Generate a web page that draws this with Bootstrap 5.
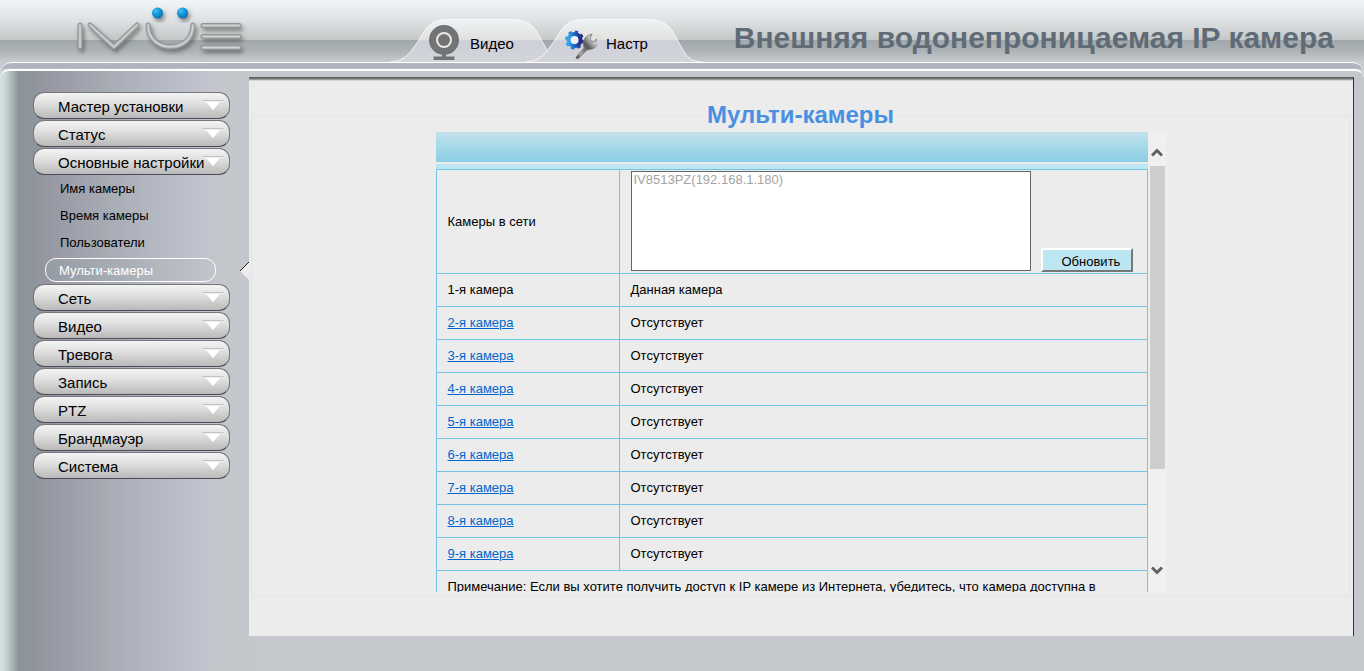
<!DOCTYPE html>
<html lang="ru">
<head>
<meta charset="utf-8">
<meta name="viewport" content="width=device-width, initial-scale=1">
<title>Мульти-камеры</title>
<link href="https://cdn.jsdelivr.net/npm/bootstrap@5.3.0/dist/css/bootstrap.min.css" rel="stylesheet">
<style>
body{font:13px/18px "Liberation Sans",Arial,sans-serif;color:#000;background:#c8cbcd}
.top-bar{height:62px;background:linear-gradient(#f1f5f9 0,#dfe2e4 20px,#c3c7c7 40px,#a1a8ac 40px,#acb1b4 50px,#c8cbcd 62px)}
.logo-box{width:390px;padding-left:70px}
.tab-link{position:relative;width:177px;height:43px;font-size:15px;line-height:20px;color:#000;text-decoration:none}
.tab-link + .tab-link{margin-left:-41px}
.tab-shape{position:absolute;inset:0}
.tab-icon{position:relative;width:34px;height:38px;margin-left:37px;margin-right:9px}
.tab-text{position:relative;padding-top:6px}
.product{font-size:30px;line-height:36px;color:#5f6b76;padding:20px 30px 0 0}
.shell{border-top:1px solid #fff;border-radius:12px 12px 0 0;background:linear-gradient(#b3b7bf,#adb1bd 5px,#c8ccd0 6px);padding-top:6px}
.shell-in{border-top:2px solid #fff;border-radius:9px 9px 0 0;padding:6px 10px 35px 0;
 background:linear-gradient(90deg,#d5e2e2 0,#d0dcdc 4px,#8b939b 19px,#8f959d 35px,#9798a3 50px,#a5a9b2 100px,#b3b7c1 150px,#c0c3cd 200px,#c3c6ca 214px,#c4c7cc 249px)}
.side{width:249px;padding:15px 0 0 33px}
.menu-btn{display:flex;align-items:center;justify-content:space-between;width:197px;height:27px;margin-bottom:1px;padding:1px 6px 0 24px;border:1px solid #77777b;border-bottom-color:#4d4d55;border-radius:11px;background:linear-gradient(#f4f4f4,#dedede 45%,#b9b9b9);font-size:15px;line-height:20px;white-space:nowrap;color:#000}
.menu-btn span{width:0;padding-top:1px}
.menu-btn svg{margin:-2px -1px 0 0}
.sub-link{display:block;height:27px;padding:4px 0 0 27px;color:#000;text-decoration:none}
.sub-link.current{width:171px;height:24px;margin:1px 0 3px 12px;padding:3px 0 0 13px;border:1px solid #fff;border-radius:11px;color:#fff;background:linear-gradient(90deg,#959ca5,#c2c5cb)}
.sub-row{position:relative;margin-bottom:-1px}
.notch{position:absolute;right:0;top:4px}
.panel{border-top:1px solid #5c5e5c;border-right:1px solid #333;background:#ececec;padding:20px 3px 39px 2px;box-shadow:inset 0 1px #747674,inset 0 2px #9a9c9a,inset 0 3px #d4d4d4}
.group-box{border:1px solid #e4e4e4;padding:0 0 4px}
.group-box legend{float:none;width:auto;margin:0 auto;padding:0 3px;font-size:24px;line-height:34px;font-weight:bold;color:#4a90e2}
.list-box{max-width:730px;height:460px}
.head-bar{height:30px;margin-bottom:2px;background:linear-gradient(#c3e1ea,#a6d9e8 50%,#8bcee6)}
.head-strip{height:5px;background:#bce6f2}
.cams{width:100%;border-collapse:collapse}
.cams td,.cams th{border:1px solid #74c5e3;padding:7px 11px;height:33px;font-weight:normal}
.cams th{width:183px}
.cams a{color:#0066cc}
.cams .pick{padding:1px 11px 2px}
.cam-list{width:400px;height:100px;border:1px solid #666;border-radius:0;background:#fff;padding:0;font-size:13px;overflow:hidden}
.cam-list option{color:#a3a3a3;padding:0 2px}
.refresh{width:92px;height:24px;margin:0 0 -1px 10px;padding:3px 0 0 19px;border:2px solid;border-color:#fff #777 #777 #fff;background:#bce6f2;line-height:16px;text-align:left;color:#000}
.bar{width:17px;background:#f0f0f0;margin-left:1px}
.bar button{border:0;background:none;padding:6px 0 0;height:34px;width:17px;display:flex;align-items:center;justify-content:center}
.bar .down{padding:0 0 8px}
.thumb{width:15px;height:303px;margin-left:1px;background:#cdcdcd}
</style>
</head>
<body>
<header class="top-bar d-flex align-items-end">
 <div class="logo-box flex-shrink-0">
  <svg class="d-block" width="180" height="62" viewBox="0 0 180 62" role="img" aria-label="IVUE">
   <defs>
    <radialGradient id="dot" cx=".35" cy=".3" r=".8"><stop offset="0" stop-color="#49bdf0"/><stop offset=".5" stop-color="#0795d8"/><stop offset="1" stop-color="#07639c"/></radialGradient>
    <filter id="sh" x="-10%" y="-20%" width="125%" height="160%"><feDropShadow dx="2" dy="3" stdDeviation="2" flood-color="#444" flood-opacity=".6"/></filter>
    <g id="mark-lines"><path d="M10 25V47M20 25L44 47L67 25M78 25C78 54 123 54 123 25M133 25.500H169M133 36.500H169M133 47.500H169"/></g>
   </defs>
   <g fill="none" stroke-linecap="round" stroke-linejoin="round" filter="url(#sh)">
    <use href="#mark-lines" stroke="#898c8e" stroke-width="5"/>
    <use href="#mark-lines" stroke="#b0b3b4" stroke-width="3.500"/>
    <use href="#mark-lines" stroke="#cfd1d2" stroke-width="1.500"/>
   </g>
   <g filter="url(#sh)"><circle cx="87.500" cy="13" r="5.500" fill="url(#dot)"/><circle cx="112.500" cy="13" r="5.500" fill="url(#dot)"/></g>
  </svg>
 </div>
 <nav class="d-flex flex-shrink-0">
  <a class="tab-link d-flex align-items-center" href="#video">
   <svg class="tab-shape" width="177" height="43" viewBox="0 0 177 43" aria-hidden="true">
    <defs><linearGradient id="tab" x2="0" y2="1"><stop offset="0" stop-color="#eff3f7"/><stop offset=".48" stop-color="#e1e0dd"/><stop offset=".5" stop-color="#cdcfda"/><stop offset="1" stop-color="#d4d5d9"/></linearGradient>
    <path id="tab-path" d="M0 43C15 42 19 35 27 24C35 12 38 .5 58 .5H122C142 .5 147 12 153 24C160 36 162 43 177 43"/></defs>
    <use href="#tab-path" fill="url(#tab)" stroke="#fff" stroke-opacity=".8"/>
   </svg>
   <svg class="tab-icon" viewBox="0 0 34 38" aria-hidden="true" fill="#717375">
    <circle cx="17" cy="18" r="8.500" fill="#e8e8e8"/><circle cx="17" cy="18" r="11.500" fill="none" stroke="#717375" stroke-width="7"/><circle cx="17" cy="18" r="6"/><rect x="15" y="31" width="4" height="5"/><rect x="6.500" y="34.500" width="21" height="4"/>
   </svg>
   <span class="tab-text">Видео</span>
  </a>
  <a class="tab-link d-flex align-items-center" href="#setup" aria-current="page">
   <svg class="tab-shape" width="177" height="43" viewBox="0 0 177 43" aria-hidden="true"><use href="#tab-path" fill="url(#tab)" stroke="#fff" stroke-opacity=".8"/></svg>
   <svg class="tab-icon" viewBox="0 0 34 38" aria-hidden="true">
    <defs><linearGradient id="gear"><stop offset="0" stop-color="#39a7ee"/><stop offset=".5" stop-color="#1b66bd"/><stop offset="1" stop-color="#202a80"/></linearGradient>
    <linearGradient id="steel" x1="0" y1="1" x2="1" y2="0"><stop offset="0" stop-color="#333"/><stop offset=".2" stop-color="#aaa"/><stop offset=".5" stop-color="#555"/><stop offset=".75" stop-color="#ccc"/><stop offset="1" stop-color="#555"/></linearGradient></defs>
    <circle cx="11.500" cy="18" r="6" fill="#eef2f8" stroke="url(#gear)" stroke-width="4"/>
    <circle cx="11.500" cy="18" r="8.500" fill="none" stroke="url(#gear)" stroke-width="2" stroke-dasharray="3.500 3.176"/>
    <path d="M13 35L21 26C19 20 21 15 26 13L29 12L27 17L30 20L35 16C36 21 33 26 29 27L24 28L16 36Q13 38 13 35Z" fill="url(#steel)" stroke="#777" stroke-width=".7"/>
   </svg>
   <span class="tab-text">Настр</span>
  </a>
 </nav>
 <h1 class="product ms-auto mb-auto fw-bold text-nowrap">Внешняя водонепроницаемая IP камера</h1>
</header>
<div class="shell">
 <div class="shell-in d-flex align-items-start">
  <nav class="side flex-shrink-0" id="side">
   <button class="menu-btn" type="button"><span>Мастер установки</span></button>
   <button class="menu-btn" type="button"><span>Статус</span></button>
   <button class="menu-btn" type="button" aria-expanded="true"><span>Основные настройки</span></button>
   <a class="sub-link" href="#name">Имя камеры</a>
   <a class="sub-link" href="#time">Время камеры</a>
   <a class="sub-link" href="#users">Пользователи</a>
   <div class="sub-row"><a class="sub-link current" href="#multi" aria-current="page">Мульти-камеры</a>
    <svg class="notch" width="10" height="18" viewBox="0 0 10 18" aria-hidden="true"><path d="M10 0L1 9L10 18Z" fill="#ececec"/><path d="M10 0L1 9" stroke="#222" fill="none"/></svg></div>
   <button class="menu-btn" type="button"><span>Сеть</span></button>
   <button class="menu-btn" type="button"><span>Видео</span></button>
   <button class="menu-btn" type="button"><span>Тревога</span></button>
   <button class="menu-btn" type="button"><span>Запись</span></button>
   <button class="menu-btn" type="button"><span>PTZ</span></button>
   <button class="menu-btn" type="button"><span>Брандмауэр</span></button>
   <button class="menu-btn" type="button"><span>Система</span></button>
  </nav>
  <main class="panel flex-grow-1">
   <fieldset class="group-box">
    <legend>Мульти-камеры</legend>
    <div class="list-box d-flex mx-auto">
     <div class="flex-grow-1 overflow-hidden">
      <div class="head-bar"></div>
      <div class="head-strip"></div>
      <table class="cams">
       <tbody id="cams">
        <tr><th scope="row"><label for="found">Камеры в сети</label></th>
         <td class="pick"><div class="d-flex align-items-end"><select class="cam-list" id="found" size="5"><option disabled>IV8513PZ(192.168.1.180)</option></select><button class="refresh" type="button">Обновить</button></div></td></tr>
        <tr><th scope="row">1-я камера</th><td>Данная камера</td></tr>
        <tr><th scope="row"><a href="#cam2">2-я камера</a></th><td>Отсутствует</td></tr>
        <tr><th scope="row"><a href="#cam3">3-я камера</a></th><td>Отсутствует</td></tr>
        <tr><th scope="row"><a href="#cam4">4-я камера</a></th><td>Отсутствует</td></tr>
        <tr><th scope="row"><a href="#cam5">5-я камера</a></th><td>Отсутствует</td></tr>
        <tr><th scope="row"><a href="#cam6">6-я камера</a></th><td>Отсутствует</td></tr>
        <tr><th scope="row"><a href="#cam7">7-я камера</a></th><td>Отсутствует</td></tr>
        <tr><th scope="row"><a href="#cam8">8-я камера</a></th><td>Отсутствует</td></tr>
        <tr><th scope="row"><a href="#cam9">9-я камера</a></th><td>Отсутствует</td></tr>
        <tr><td colspan="2">Примечание: Если вы хотите получить доступ к IP камере из Интернета, убедитесь, что камера доступна в</td></tr>
       </tbody>
      </table>
     </div>
     <div class="bar d-flex flex-column flex-shrink-0">
      <button type="button" aria-label="Вверх"><svg width="12" height="10" viewBox="0 0 12 10"><path d="M1 8.500L6 3.500L11 8.500" fill="none" stroke="#606060" stroke-width="3"/></svg></button>
      <div class="thumb"></div>
      <button class="down mt-auto" type="button" aria-label="Вниз"><svg width="12" height="10" viewBox="0 0 12 10"><path d="M1 1.500L6 6.500L11 1.500" fill="none" stroke="#606060" stroke-width="3"/></svg></button>
     </div>
    </div>
   </fieldset>
  </main>
 </div>
</div>
<script src="https://cdn.jsdelivr.net/npm/bootstrap@5.3.0/dist/js/bootstrap.bundle.min.js"></script>
<script>
document.querySelectorAll('.menu-btn').forEach(b => b.insertAdjacentHTML('beforeend',
 '<svg width="22" height="14" viewBox="0 0 22 14" aria-hidden="true"><path d="M0 2.500H22" stroke="#c4c4c4"/><path d="M0 3.500H22" stroke="#eee"/><path d="M4 4H18L11 12Z" fill="#fff"/></svg>'));
</script>
</body>
</html>
